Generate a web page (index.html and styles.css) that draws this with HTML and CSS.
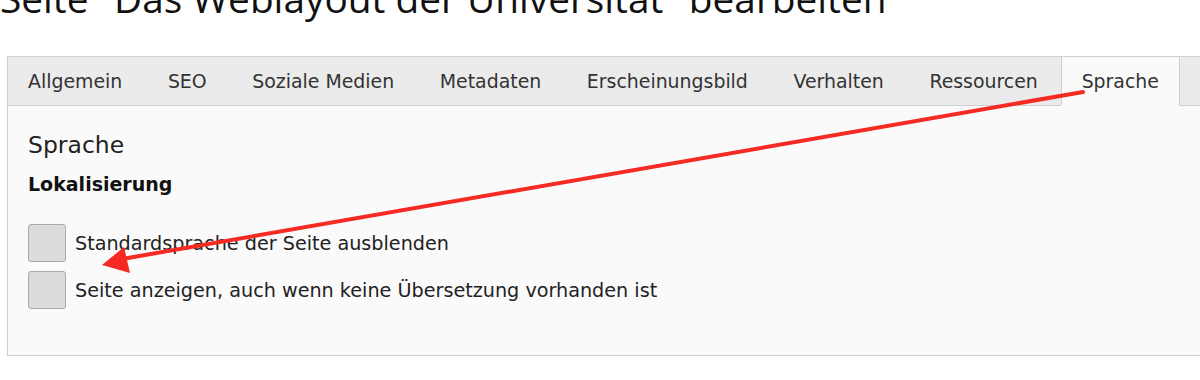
FILE: index.html
```html
<!DOCTYPE html>
<html lang="de">
<head>
  <meta charset="UTF-8">
  <title>Seite bearbeiten</title>
  <link rel="stylesheet" href="styles.css">
</head>
<body>

  <h1 class="page-title">Seite "Das Weblayout der Universität" bearbeiten</h1>

  <div class="editor">
    <ul class="tabs">
      <li>Allgemein</li>
      <li>SEO</li>
      <li>Soziale Medien</li>
      <li>Metadaten</li>
      <li>Erscheinungsbild</li>
      <li>Verhalten</li>
      <li>Ressourcen</li>
      <li class="active">Sprache</li>
    </ul>

    <div class="panel">
      <h2>Sprache</h2>
      <h3>Lokalisierung</h3>

      <label class="check">
        <span class="box"></span>
        Standardsprache der Seite ausblenden
      </label>
      <label class="check">
        <span class="box"></span>
        Seite anzeigen, auch wenn keine Übersetzung vorhanden ist
      </label>
    </div>
  </div>

  <!-- Markierung: Pfeil vom Tab zur Option -->
  <svg class="arrow" width="1200" height="380" viewBox="0 0 1200 380">
    <line x1="1083" y1="92" x2="122" y2="259" stroke="#f52a22" stroke-width="4" stroke-linecap="round"/>
    <polygon points="102,265 124,247 130,273" fill="#f52a22"/>
  </svg>

</body>
</html>
```

FILE: styles.css
```css
* {
  margin: 0;
  padding: 0;
  box-sizing: border-box;
}

body {
  font-family: "DejaVu Sans", Verdana, sans-serif;
  background-color: #fff;
  color: #333;
  width: 1200px;
  height: 380px;
  overflow: hidden;
  position: relative;
}

.page-title {
  font-family: "Open Sans", sans-serif;
  font-weight: normal;
  font-size: 38.8px;
  line-height: 38px;
  color: #111;
  margin-top: -21px;
  white-space: nowrap;
}

.editor {
  margin: 39px 0 0 7px;
  width: 1220px;
}

.tabs {
  list-style: none;
  display: flex;
  height: 50px;
  background-color: #ebebeb;
  border: 1px solid #cfcfcf;
  border-bottom: none;
}

.tabs li {
  padding: 0 22.8px;
  line-height: 48px;
  font-size: 18.9px;
  color: #333;
  white-space: nowrap;
  border-bottom: 1px solid #cfcfcf;
}

.tabs li:first-child {
  padding-left: 20px;
}

.tabs li.active {
  background-color: #fafafa;
  border: 1px solid #cfcfcf;
  border-bottom-color: #fafafa;
  margin-top: -1px;
  height: 50px;
  padding: 0 20px;
}

.tabs::after {
  content: "";
  flex: 1;
  border-bottom: 1px solid #cfcfcf;
}

.panel {
  background-color: #fafafa;
  border: 1px solid #cfcfcf;
  border-top: none;
  height: 250px;
  padding: 25px 20px;
}

.panel h2 {
  font-size: 23.5px;
  font-weight: normal;
  color: #222;
  line-height: 28px;
}

.panel h3 {
  font-size: 19px;
  font-weight: bold;
  color: #111;
  margin-top: 14px;
  margin-bottom: 29px;
}

.check {
  display: flex;
  align-items: center;
  gap: 9px;
  font-size: 19.2px;
  color: #222;
  margin-bottom: 9px;
}

.check .box {
  width: 38px;
  height: 38px;
  background-color: #dcdcdc;
  border: 1px solid #a9a9a9;
  border-radius: 3px;
}

.arrow {
  position: absolute;
  top: 0;
  left: 0;
}
```
